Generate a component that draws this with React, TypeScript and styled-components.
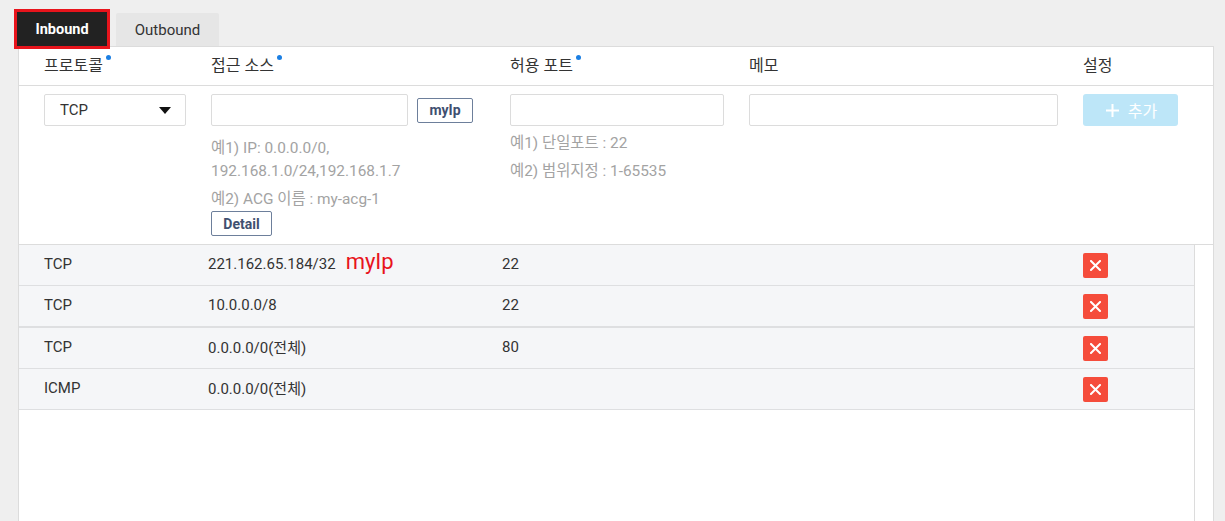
import React from "react";
import styled, { createGlobalStyle } from "styled-components";

const GlobalStyle = createGlobalStyle`
  html, body { margin: 0; padding: 0; }
  body {
    background: #efefef;
    font-family: "Roboto", "Noto Sans CJK KR", "Noto Sans", sans-serif;
    color: #333;
  }
  * { box-sizing: border-box; }
`;

const Page = styled.div`
  padding-top: 9px;
  height: 521px;
  overflow: hidden;
`;

const TabBar = styled.div`
  display: flex;
  align-items: flex-start;
  height: 37px;
  margin-left: 14px;
  position: relative;
  z-index: 1;
`;

const ActiveTab = styled.div`
  width: 96px;
  height: 40px;
  border: 3px solid #e8141c;
  background: #222;
  color: #fff;
  font-size: 14.5px;
  font-weight: 700;
  display: flex;
  align-items: center;
  justify-content: center;
`;

const Tab = styled.div`
  width: 103px;
  height: 33px;
  margin-top: 4px;
  margin-left: 6px;
  background: #e6e6e6;
  border-radius: 2px 2px 0 0;
  color: #333;
  font-size: 15px;
  display: flex;
  align-items: center;
  justify-content: center;
`;

const Panel = styled.div`
  margin-left: 18px;
  width: 1196px;
  height: 480px;
  background: #fff;
  border: 1px solid #dcdcdc;
  border-bottom: none;
`;

const HeaderRow = styled.div`
  display: grid;
  grid-template-columns: 167px 299px 239px 334px 1fr;
  padding-left: 25px;
  height: 39px;
  align-items: center;
  border-bottom: 1px solid #dcdcdc;
`;

const HeadCell = styled.div`
  font-size: 16px;
  color: #333;
  display: flex;
  align-items: flex-start;
  padding-bottom: 5px;
`;

const Dot = styled.span`
  width: 5px;
  height: 5px;
  border-radius: 50%;
  background: #1b7fe3;
  margin-left: 3px;
  margin-top: 3px;
`;

const FormRow = styled.div`
  display: grid;
  grid-template-columns: 167px 299px 239px 334px 1fr;
  padding-left: 25px;
  padding-top: 8px;
  height: 159px;
  border-bottom: 1px solid #dcdcdc;
`;

const Cell = styled.div`
  display: flex;
  flex-direction: column;
  align-items: flex-start;
`;

const InputLine = styled.div`
  display: flex;
  align-items: center;
  gap: 9px;
`;

const Select = styled.div`
  width: 142px;
  height: 32px;
  border: 1px solid #dcdcdc;
  border-radius: 2px;
  display: flex;
  align-items: center;
  justify-content: space-between;
  padding: 0 14px 0 15px;
  font-size: 15px;
  color: #333;
`;

const Caret = styled.span`
  width: 0;
  height: 0;
  border-left: 6px solid transparent;
  border-right: 6px solid transparent;
  border-top: 7px solid #111;
  margin-top: 1px;
`;

const Input = styled.input<{ $w: number }>`
  width: ${(p) => p.$w}px;
  height: 32px;
  border: 1px solid #dcdcdc;
  border-radius: 2px;
  outline: none;
  padding: 0 8px;
  font: inherit;
  background: #fff;
`;

const OutlineButton = styled.button<{ $w: number }>`
  width: ${(p) => p.$w}px;
  height: 25px;
  border: 1px solid #6d7f9b;
  border-radius: 2px;
  background: #fff;
  color: #3f5070;
  font-family: inherit;
  font-size: 14px;
  font-weight: 700;
  padding: 0;
  display: flex;
  align-items: center;
  justify-content: center;
`;

const HintBlock = styled.div<{ $top: number }>`
  margin-top: ${(p) => p.$top}px;
  font-size: 15.4px;
  line-height: 23px;
  color: #a3a3a3;
`;

const Hint = styled.div<{ $gap?: number }>`
  margin-top: ${(p) => p.$gap ?? 0}px;
`;

const AddButton = styled.button`
  width: 95px;
  height: 32px;
  border: none;
  border-radius: 3px;
  background: #bde6f8;
  color: #fff;
  font-family: inherit;
  font-size: 16px;
  display: flex;
  align-items: center;
  justify-content: center;
  gap: 9px;
  padding: 0 0 0 2px;
`;

const List = styled.div`
  width: 1176px;
  border-right: 1px solid #dcdcdc;
  height: 100%;
`;

const ListRow = styled.div<{ $thick?: boolean }>`
  display: grid;
  grid-template-columns: 164px 294px 581px 1fr;
  padding-left: 25px;
  height: ${(p) => (p.$thick ? 42 : 41)}px;
  align-items: center;
  background: #f5f6f8;
  border-bottom: ${(p) => (p.$thick ? 2 : 1)}px solid #dedfe1;
  font-size: 15px;
  color: #333;
`;

const ListCell = styled.div`
  display: flex;
  align-items: center;
  padding-bottom: 3px;
`;

const ButtonCell = styled.div`
  display: flex;
  align-items: center;
`;

const MyIp = styled.span`
  color: #e8141c;
  font-size: 22px;
  margin-left: 10px;
  margin-top: -4px;
`;

const DeleteButton = styled.button`
  width: 25px;
  height: 25px;
  border: none;
  border-radius: 2px;
  background: #f54c3b;
  padding: 0;
  display: flex;
  align-items: center;
  justify-content: center;
`;

const Below = styled.div`
  display: flex;
  height: 300px;
`;

const rows = [
  { proto: "TCP", src: "221.162.65.184/32", mine: true, port: "22" },
  { proto: "TCP", src: "10.0.0.0/8", port: "22", thick: true },
  { proto: "TCP", src: "0.0.0.0/0(전체)", port: "80" },
  { proto: "ICMP", src: "0.0.0.0/0(전체)", port: "" },
];

const XIcon = () => (
  <svg width="11" height="11" viewBox="0 0 11 11">
    <path d="M1 1 L10 10 M10 1 L1 10" stroke="#fff" strokeWidth="2" strokeLinecap="square" />
  </svg>
);

const PlusIcon = () => (
  <svg width="13" height="13" viewBox="0 0 13 13">
    <path d="M6.5 0 V13 M0 6.5 H13" stroke="#fff" strokeWidth="2" />
  </svg>
);

export default function App() {
  return (
    <>
      <GlobalStyle />
      <Page>
        <TabBar>
          <ActiveTab>Inbound</ActiveTab>
          <Tab>Outbound</Tab>
        </TabBar>
        <Panel>
          <HeaderRow>
            <HeadCell>
              프로토콜<Dot />
            </HeadCell>
            <HeadCell>
              접근 소스<Dot />
            </HeadCell>
            <HeadCell>
              허용 포트<Dot />
            </HeadCell>
            <HeadCell>메모</HeadCell>
            <HeadCell>설정</HeadCell>
          </HeaderRow>
          <FormRow>
            <Cell>
              <Select>
                TCP
                <Caret />
              </Select>
            </Cell>
            <Cell>
              <InputLine>
                <Input $w={197} />
                <OutlineButton $w={56}>myIp</OutlineButton>
              </InputLine>
              <HintBlock $top={11}>
                <Hint>예1) IP: 0.0.0.0/0,</Hint>
                <Hint>192.168.1.0/24,192.168.1.7</Hint>
                <Hint $gap={5}>예2) ACG 이름 : my-acg-1</Hint>
              </HintBlock>
              <OutlineButton $w={61}>Detail</OutlineButton>
            </Cell>
            <Cell>
              <Input $w={214} />
              <HintBlock $top={6}>
                <Hint>예1) 단일포트 : 22</Hint>
                <Hint $gap={5}>예2) 범위지정 : 1-65535</Hint>
              </HintBlock>
            </Cell>
            <Cell>
              <Input $w={309} />
            </Cell>
            <Cell>
              <AddButton>
                <PlusIcon />
                추가
              </AddButton>
            </Cell>
          </FormRow>
          <Below>
            <List>
              {rows.map((r, i) => (
                <ListRow key={i} $thick={r.thick}>
                  <ListCell>{r.proto}</ListCell>
                  <ListCell>
                    {r.src}
                    {r.mine && <MyIp>myIp</MyIp>}
                  </ListCell>
                  <ListCell>{r.port}</ListCell>
                  <ButtonCell>
                    <DeleteButton>
                      <XIcon />
                    </DeleteButton>
                  </ButtonCell>
                </ListRow>
              ))}
            </List>
          </Below>
        </Panel>
      </Page>
    </>
  );
}
